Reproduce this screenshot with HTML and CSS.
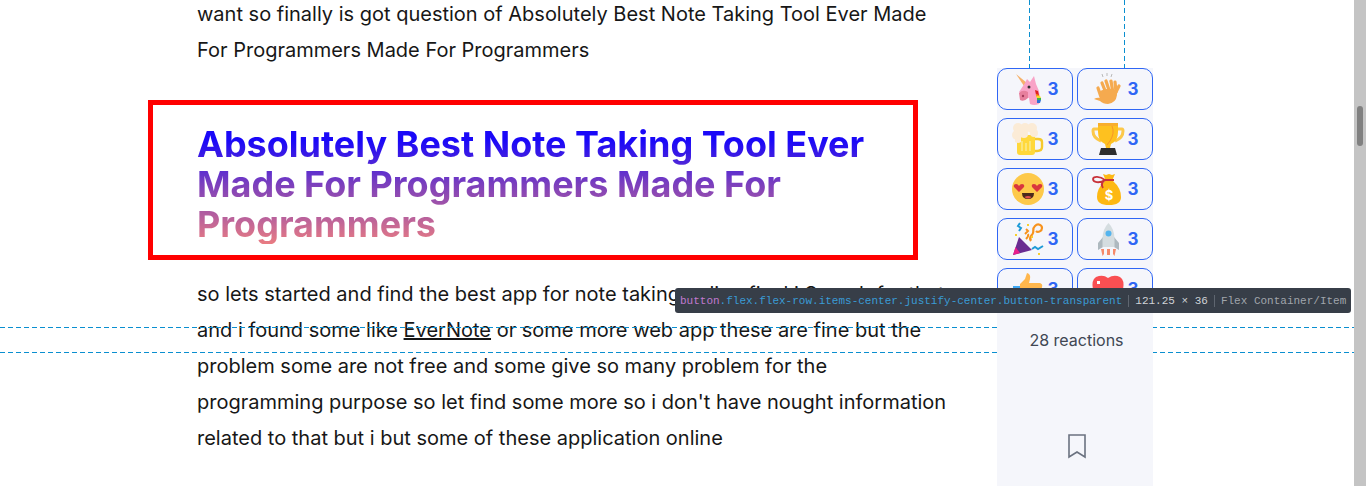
FILE: index.html
```html
<!DOCTYPE html>
<html lang="en">
<head>
    <meta charset="UTF-8">
    <meta name="viewport" content="width=device-width, initial-scale=1.0">
    <title>Absolutely Best Note Taking Tool Ever Made For Programmers</title>
    <link rel="stylesheet" href="styles.css">
</head>
<body>
    <main class="article">
        <p class="intro">want so finally is got question of Absolutely Best Note Taking Tool Ever Made For Programmers Made For Programmers</p>
        <h2 class="heading"><span class="heading-text">Absolutely Best Note Taking Tool Ever Made For Programmers Made For Programmers</span></h2>
        <p>so lets started and find the best app for note taking online final i Search for that and i found some like <a href="#">EverNote</a> or some more web app these are fine but the problem some are not free and some give so many problem for the programming purpose so let find some more so i don't have nought information related to that but i but some of these application online</p>
    </main>

    <aside class="sidebar">
        <div class="reactions">
            <button class="reaction">
                <svg class="emoji" viewBox="0 0 32 32">
                    <path d="M4 1l11 9-3 3z" fill="#f6b26b"/>
                    <path d="M13 10l2-4 3 3 4-6 2 8 3 7 1 8-1 5q-5 2-9 0l-1-6-5-1-5-5z" fill="#f9a3c7"/>
                    <path d="M7 20q4-4 9-1l0 6q-4 4-8 2z" fill="#e77f9d"/>
                    <circle cx="11" cy="23" r="1.200" fill="#a33a5c"/>
                    <circle cx="17" cy="14" r="1.500" fill="#333"/>
                    <path d="M23 17l3 1 1 4-3 0z" fill="#e02020"/>
                    <path d="M24 21l3 1 1 2-4 0z" fill="#f7931e"/>
                    <path d="M24 23l4 0 1 2-4 0z" fill="#f8d92c"/>
                    <path d="M25 25l4 0 0 2-4 0z" fill="#3cb54a"/>
                    <path d="M25 27l4 0-1 3-3 0z" fill="#2b6fd6"/>
                </svg>
                <span class="count">3</span>
            </button>
            <button class="reaction">
                <svg class="emoji" viewBox="0 0 32 32">
                    <path d="M10 1l1 3M15 0v3M20 1l-1 3" stroke="#b9b9b9" stroke-width="1" fill="none"/>
                    <g stroke="#f5aa4f" stroke-width="3.200" stroke-linecap="round" fill="none">
                        <path d="M6 15l3 9"/>
                        <path d="M10 10l4 10"/>
                        <path d="M14 8l4 12"/>
                        <path d="M19 8l2 12"/>
                        <path d="M23 9l1 10"/>
                        <path d="M27 13l-4 8"/>
                    </g>
                    <path d="M8 18q8-4 16-1l1 5q-1 8-9 9-5 0-8-3L2 26q3-2 7-1z" fill="#f5aa4f"/>
                </svg>
                <span class="count">3</span>
            </button>
            <button class="reaction">
                <svg class="emoji" viewBox="0 0 32 32">
                    <path d="M21 16h5q4 0 4 3v5q0 4-5 4h-4" fill="none" stroke="#f5c92c" stroke-width="2.400"/>
                    <path d="M5 12h18v17q0 3-3 3H8q-3 0-3-3z" fill="#ffd83b"/>
                    <path d="M10 18v10M14 20v8M18 18v10" stroke="#fbe98a" stroke-width="1.600"/>
                    <g fill="#fbebd6">
                        <circle cx="6" cy="5" r="5"/>
                        <circle cx="13" cy="5" r="5"/>
                        <circle cx="20" cy="5" r="5"/>
                        <circle cx="22" cy="10" r="4"/>
                        <circle cx="5" cy="12" r="5"/>
                        <circle cx="12" cy="11" r="4"/>
                        <path d="M3 14h6v5q-3 2-6 0z"/>
                    </g>
                </svg>
                <span class="count">3</span>
            </button>
            <button class="reaction">
                <svg class="emoji" viewBox="0 0 32 32">
                    <path d="M7 6H2q-1 0-1 2 0 7 8 10M25 6h5q1 0 1 2 0 7-8 10" fill="none" stroke="#fcc84a" stroke-width="3"/>
                    <path d="M6 0h20v9q0 9-7 12l-1 4h-4l-1-4q-7-3-7-12z" fill="#fec11f"/>
                    <path d="M6 0h20v3H6z" fill="#f8ae2c"/>
                    <path d="M20 3q3 7-2 15l-3 4" fill="none" stroke="#f58a2c" stroke-width=".8"/>
                    <path d="M9 25h14l2 7H7z" fill="#2d2d2d"/>
                </svg>
                <span class="count">3</span>
            </button>
            <button class="reaction">
                <svg class="emoji" viewBox="0 0 32 32">
                    <circle cx="16" cy="16" r="16" fill="#fdc94a"/>
                    <path d="M7 19L2 14q-1-3 2-3 2 0 3 2 1-2 3-2 3 0 2 3z" fill="#d9363e"/>
                    <path d="M25 19l-5-5q-1-3 2-3 2 0 3 2 1-2 3-2 3 0 2 3z" fill="#d9363e"/>
                    <path d="M10 20h12q0 6-6 6t-6-6z" fill="#4a2a1c"/>
                    <path d="M12.500 24q3.500-2 7 0-3.500 3-7 0z" fill="#e2504f"/>
                </svg>
                <span class="count">3</span>
            </button>
            <button class="reaction">
                <svg class="emoji" viewBox="0 0 32 32">
                    <path d="M11 1l3 1 3-1 3 1 3-1-3 7h-6z" fill="#fdb813"/>
                    <path d="M13 8h8q8 7 8 16 0 8-12 8T5 24q0-9 8-16z" fill="#fdb813"/>
                    <path d="M13 7h9" stroke="#c8323a" stroke-width="2"/>
                    <path d="M13 7C8 3 1 3 1 6s6 5 12 1c-3 2-4 5-2 8" fill="none" stroke="#c8323a" stroke-width="1.800"/>
                    <text class="dollar" x="17" y="27" text-anchor="middle">$</text>
                </svg>
                <span class="count">3</span>
            </button>
            <button class="reaction">
                <svg class="emoji" viewBox="0 0 32 32">
                    <path d="M7 14l13 13-19 5z" fill="#6a2c91"/>
                    <path d="M3.500 24l4.500 6-7 2z" fill="#e91e8c"/>
                    <path d="M19 18c-3-4 1-5 2-8s-1-4 2-7 7-1 7 2-4 5-6 3" fill="none" stroke="#f7931e" stroke-width="2.200"/>
                    <path d="M13 11l3-3-2-2M14 16q3-3 2-5" fill="none" stroke="#f7931e" stroke-width="2"/>
                    <path d="M8 0l-2 3 3 2-2 3" fill="none" stroke="#1e9bd7" stroke-width="2"/>
                    <path d="M20 26l3-2 3 2 5-3" fill="none" stroke="#1e9bd7" stroke-width="2"/>
                    <path d="M15 1h2v2h-2zM3 11h2v2H3zM26 30h2v2h-2zM19 13h2v2h-2z" fill="#f8cf2c"/>
                </svg>
                <span class="count">3</span>
            </button>
            <button class="reaction">
                <svg class="emoji" viewBox="0 0 32 32">
                    <path d="M11 14l-5 6v7l5-3zM22 14l5 6v7l-5-3z" fill="#aeb9bf"/>
                    <path d="M16.500 0q6 6 6 16v8h-12v-8q0-10 6-16z" fill="#d5dde0"/>
                    <circle cx="16.500" cy="10.500" r="3" fill="#54b4ee"/>
                    <path d="M9 26h3v5l-1.500 2zM15 26h3v6h-3zM21 26h3l-1.500 7-1.500-2z" fill="#f58a6b"/>
                </svg>
                <span class="count">3</span>
            </button>
            <button class="reaction">
                <svg class="emoji" viewBox="0 0 32 32">
                    <path d="M1 13h7v19H1z" fill="#3fa9f5"/>
                    <path d="M8 11l5-5 2-6q4 1 3 6l-1 4h11q3 1 2 4l-3 14q-1 3-4 3H8z" fill="#ffb74d"/>
                </svg>
                <span class="count">3</span>
            </button>
            <button class="reaction">
                <svg class="emoji" viewBox="0 0 32 32">
                    <path d="M16 32L1 17Q-1 7 4 4q7-3 12 1 6-4 12-1 5 3 3 13z" fill="#f94f52"/>
                    <path d="M5 8h3v3H5z" fill="#fff"/>
                </svg>
                <span class="count">3</span>
            </button>
        </div>
        <p class="reaction-total">28 reactions</p>
        <button class="bookmark">
            <svg width="20" height="26" viewBox="0 0 20 26"><path d="M2 2h16v22l-8-5-8 5z" fill="none" stroke="#6b7280" stroke-width="1.600"/></svg>
        </button>
    </aside>

    <div class="scrollbar"><div class="scrollbar-thumb"></div></div>

    <!-- devtools overlay -->
    <div class="guide guide-h guide-top"></div>
    <div class="guide guide-h guide-bottom"></div>
    <div class="guide guide-v guide-left"></div>
    <div class="guide guide-v guide-right"></div>
    <div class="inspect-tip">
        <span class="tip-selector"><span class="tip-tag">button</span>.flex.flex-row.items-center.justify-center.button-transparent</span>
        <span class="tip-size">121.25 × 36</span>
        <span class="tip-type">Flex Container/Item</span>
    </div>
</body>
</html>
```

FILE: styles.css
```css
html, body {
    height: 100%;
}

body {
    font-family: Inter, "Liberation Sans", sans-serif;
    background-color: #ffffff;
    color: #171717;
    margin: 0;
    display: flex;
    overflow: hidden;
    position: relative;
}

.article {
    width: 849px;
    margin-left: 148px;
    font-size: 20px;
    line-height: 36px;
    flex-shrink: 0;
}

.article p {
    margin: 16px 50px 0 49px;
}

.article p.intro {
    margin-top: -4px;
}

.article a {
    color: #171717;
}

.heading {
    width: 770px;
    box-sizing: border-box;
    margin: 32px 0 0;
    padding: 19px 44px 11px;
    border: 5px solid #ff0000;
    font-size: 36px;
    line-height: 40px;
    font-weight: 700;
}

.heading-text {
    display: block;
    background-image: linear-gradient(to bottom, #1a08f8 14%, #7b3fbd 50%, #e97c82 100%);
    -webkit-background-clip: text;
    background-clip: text;
    color: transparent;
}

.sidebar {
    width: 156px;
    margin-top: 68px;
    background-color: #f5f6fb;
    flex-shrink: 0;
    display: flex;
    flex-direction: column;
    align-items: center;
    position: relative;
    z-index: 1;
}

.reactions {
    display: grid;
    grid-template-columns: 76px 76px;
    grid-auto-rows: 42px;
    gap: 8px 4px;
}

.reaction {
    display: flex;
    align-items: center;
    justify-content: center;
    gap: 4px;
    padding: 0;
    background-color: #f5f6fb;
    border: 1px solid #2f66f5;
    border-radius: 10px;
}

.emoji {
    width: 32px;
    height: 32px;
    flex-shrink: 0;
    overflow: visible;
}

.dollar {
    font-family: Inter, sans-serif;
    font-size: 13px;
    font-weight: 700;
    fill: #ffffff;
}

.count {
    font-family: Inter, sans-serif;
    font-size: 17px;
    font-weight: 700;
    color: #2f66f5;
}

.reaction-total {
    margin: 18px 0 0;
    padding-left: 3px;
    font-size: 16px;
    line-height: 24px;
    color: #404753;
}

.bookmark {
    display: flex;
    margin-top: 81px;
    padding: 0 0 0 3px;
    background: none;
    border: none;
}

.scrollbar {
    width: 12px;
    margin-left: auto;
    background-color: #c4c4c4;
    flex-shrink: 0;
}

.scrollbar-thumb {
    width: 6px;
    height: 40px;
    margin: 106px 0 0 3px;
    background-color: #808080;
    border-radius: 3px;
}

.guide {
    position: absolute;
}

.guide-h {
    left: 0;
    width: 1354px;
    height: 1px;
    background-image: repeating-linear-gradient(to right, #0a8fd0 0 5px, transparent 5px 8px);
}

.guide-v {
    top: 0;
    width: 1px;
    height: 68px;
    background-image: repeating-linear-gradient(to bottom, #0a8fd0 0 5px, transparent 5px 8px);
}

.guide-top {
    top: 327px;
}

.guide-bottom {
    top: 352px;
}

.guide-left {
    left: 1029px;
}

.guide-right {
    left: 1124px;
}

.inspect-tip {
    position: absolute;
    z-index: 2;
    left: 675px;
    top: 288px;
    width: 676px;
    height: 25px;
    box-sizing: border-box;
    padding-left: 5px;
    display: flex;
    align-items: center;
    background-color: #373e48;
    border-radius: 3px;
    font-family: "Liberation Mono", monospace;
    font-size: 11px;
    white-space: nowrap;
}

.tip-selector {
    color: #3a9bd5;
}

.tip-tag {
    color: #c07ad0;
}

.tip-size {
    margin-left: 6px;
    padding: 0 6px;
    border-left: 1px solid #5f6670;
    border-right: 1px solid #5f6670;
    color: #d0d3d7;
}

.tip-type {
    margin-left: 6px;
    color: #a0a5ab;
}
```
